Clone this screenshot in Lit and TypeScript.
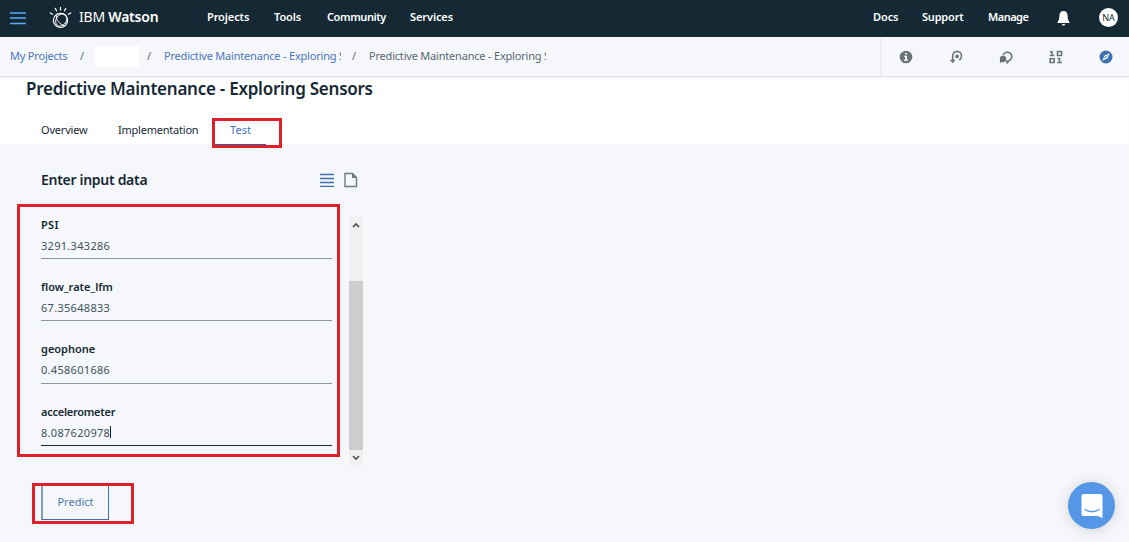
import { LitElement, html, css } from "lit";
import { customElement } from "lit/decorators.js";

const FIELDS = [
  { name: "PSI", value: "3291.343286", cls: "psi" },
  { name: "flow_rate_lfm", value: "67.35648833", cls: "flow" },
  { name: "geophone", value: "0.458601686", cls: "geo" },
  { name: "accelerometer", value: "8.087620978", cls: "acc" },
];

@customElement("top-bar")
class TopBar extends LitElement {
  static styles = css`
    :host { display: flex; align-items: center; box-sizing: border-box; height: 37px; padding-bottom: 4px; background: #152934; color: #fff; font-size: 11px; font-weight: 600; white-space: nowrap; }
    svg { display: block; flex: none; }
    .menu { margin: 3px 0 0 10px; }
    .logo { margin: 1px 0 0 23px; }
    .brand { width: 128px; margin-left: 7px; font-size: 14px; font-weight: 400; letter-spacing: -0.22px; }
    .brand b { font-weight: 600; }
    .projects { width: 67px; letter-spacing: -0.1px; }
    .tools { width: 53px; letter-spacing: -0.1px; }
    .community { width: 83px; letter-spacing: -0.4px; }
    .services { width: 60px; letter-spacing: -0.1px; }
    .spacer { flex: 1; }
    .docs { width: 49px; letter-spacing: -0.1px; }
    .support { width: 66px; letter-spacing: -0.2px; }
    .manage { width: 69px; letter-spacing: -0.5px; }
    .bell { margin-top: 2px; }
    .avatar { display: flex; align-items: center; justify-content: center; width: 19px; height: 19px; margin: 2px 11px 0 29px; border-radius: 50%; background: #fff; color: #152934; font-size: 9px; font-weight: 400; }
  `;
  render() {
    return html`
      <svg class="menu" width="16" height="14" viewBox="0 0 16 14"><path d="M0 2h16M0 7h16M0 12.5h16" stroke="#5aaafa" stroke-width="1.3" /></svg>
      <svg class="logo" width="23" height="23" viewBox="0 0 23 23" fill="none" stroke="#fff" stroke-width="1.2" stroke-linecap="round">
        <circle cx="11.5" cy="14.4" r="7.1" />
        <ellipse cx="12.3" cy="14" rx="5.1" ry="6.7" transform="rotate(35 12.3 14)" stroke-width=".9" />
        <path d="M8 8.5c-2 4 1 9 7.5 11.5" stroke-width=".9" />
        <path d="M11.5 1.3v2.6M6.3 2.4l1.2 2.4M16.7 2.4l-1.2 2.4M1.2 6.9l2.4 1.4M21.8 6.9l-2.4 1.4" />
      </svg>
      <span class="brand">IBM <b>Watson</b></span>
      <span class="projects">Projects</span><span class="tools">Tools</span><span class="community">Community</span><span class="services">Services</span>
      <span class="spacer"></span>
      <span class="docs">Docs</span><span class="support">Support</span><span class="manage">Manage</span>
      <svg class="bell" width="13" height="16" viewBox="0 0 13 16" fill="#fff"><path d="M6.5 1C3.8 1 2.6 3 2.4 5.5 2.2 9 2 10.5.5 12v1h12v-1C11 10.5 10.8 9 10.6 5.5 10.4 3 9.2 1 6.5 1zM5 14h3c0 2-3 2-3 0z" /></svg>
      <span class="avatar">NA</span>
    `;
  }
}

@customElement("crumb-bar")
class CrumbBar extends LitElement {
  static styles = css`
    :host { display: flex; align-items: center; box-sizing: border-box; height: 40px; border-bottom: 1px solid #dfe3e6; background: #f5f7fa; color: #5a6872; font-size: 11px; white-space: nowrap; }
    span { flex: none; }
    .text { margin-top: -2px; }
    .link { color: #4a76bd; }
    .home { width: 70px; margin-left: 10px; letter-spacing: -0.2px; }
    .slash { width: 15px; }
    .blank { width: 44px; height: 21px; margin-right: 8px; background: #fff; }
    .title { width: 177px; margin-left: 2px; overflow: hidden; letter-spacing: -0.2px; }
    .link.title { margin-right: 11px; }
    .spacer { flex: 1; }
    .actions { display: grid; grid-template-columns: repeat(5, 50px); align-items: center; justify-items: center; width: 248px; height: 100%; border-left: 1px solid #e6eaee; }
    svg { display: block; }
  `;
  render() {
    return html`
      <span class="text link home">My Projects</span><span class="text slash">/</span><span class="blank"></span><span class="text slash">/</span>
      <span class="text link title">Predictive Maintenance - Exploring Sensors</span>
      <span class="text slash">/</span><span class="text title">Predictive Maintenance - Exploring Sensors</span>
      <span class="spacer"></span>
      <div class="actions">
        <svg width="14" height="14" viewBox="0 0 14 14"><circle cx="7" cy="7" r="6.3" fill="#6b7479" /><path d="M6.2 3h1.8v1.6H6.2zM5 5.7h3v4h1.2v1.1H4.9V9.7h1.3V6.7H5z" fill="#fff" /></svg>
        <svg width="14" height="14" viewBox="0 0 14 14" fill="none" stroke="#6b7479"><path d="M3.7 11V5.8a4.4 4.4 0 0 1 8.8 0c0 2-.8 3.3-2.2 4.2" stroke-width="1.6" /><path d="M.7 9.8h6L3.7 13.3z" fill="#6b7479" stroke="none" /><circle cx="8.1" cy="6.3" r="1.9" fill="#6b7479" stroke="none" /></svg>
        <svg width="14" height="14" viewBox="0 0 14 14"><path d="M4.2 5.2a4.4 4.4 0 1 1 5.8 5.5L8.3 12.8l-.8-2.500" fill="none" stroke="#6b7479" stroke-width="1.6" /><circle cx="4" cy="9" r="3.2" fill="#6b7479" /><path d="M1 9v4l3-1.5z" fill="#6b7479" /></svg>
        <svg width="14" height="14" viewBox="0 0 14 14" fill="none" stroke="#6b7479" stroke-width="1.6"><path d="M1 1.7h2V5.5M.8 5.5h4.5M8.5 1.5h4v4h-4zM1.2 8.7h4v3.8h-4zM8.5 8.5h2v4M8.2 12.5h4.8" /></svg>
        <svg width="14" height="14" viewBox="0 0 14 14"><circle cx="7" cy="7" r="6.5" fill="#3d70b2" /><path d="M10.8 3.2 8.4 8.4 3.2 10.8 5.6 5.6z" fill="#fff" /><path d="m5.5 8.5 3-3" stroke="#3d70b2" /></svg>
      </div>
    `;
  }
}

@customElement("input-form")
class InputForm extends LitElement {
  static styles = css`
    :host { display: block; padding: 26px 0 0 41px; }
    .head { display: flex; align-items: center; width: 317px; height: 20px; }
    .head h2 { flex: 1; margin: -1px 0 0; font-size: 14px; font-weight: 600; letter-spacing: -0.3px; }
    svg { display: block; }
    .list { margin-right: 10px; }
    .scroll { display: flex; justify-content: space-between; position: relative; width: 322px; height: 248px; margin-top: 27px; }
    .fields { width: 291px; }
    .field { display: flex; flex-direction: column; box-sizing: border-box; height: 42.2px; margin-bottom: 20px; border-bottom: 1.5px solid #8b969e; }
    .field.acc { border-color: #152934; }
    .label { height: 17px; line-height: 16px; font-size: 11px; font-weight: 600; }
    .psi .label { letter-spacing: 0.3px; }
    .acc .label { letter-spacing: -0.25px; }
    .value { display: flex; align-items: center; height: 23px; font-size: 11px; color: #41525c; letter-spacing: 0.3px; }
    .caret { width: 1px; height: 12px; background: #152934; }
    .bar { display: flex; flex-direction: column; align-items: center; justify-content: space-between; width: 14px; background: #f0f0f0; }
    .bar svg { margin: 5px 0 4px; }
    .thumb { width: 14px; height: 169px; margin-top: 49px; background: #cdcdcd; }
    .mark { position: absolute; box-sizing: border-box; border: 3px solid #de202b; pointer-events: none; }
    .mark.form { left: -24px; top: -13px; width: 323px; height: 253px; }
    .submit { position: relative; width: 68px; height: 37px; margin-top: 18px; }
    .mark.go { left: -9px; top: 0; width: 102px; height: 41px; }
    button { display: block; box-sizing: border-box; width: 68px; height: 37px; padding: 0; border: 1px solid #3d70b2; border-left: 2px solid #7e9fc4; outline: 0; background: transparent; color: #4a79b7; font: 11px "Noto Sans", sans-serif; }
  `;
  render() {
    return html`
      <div class="head">
        <h2>Enter input data</h2>
        <svg class="list" width="14" height="14" viewBox="0 0 14 14"><path d="M0 1.5h14M0 5.5h14M0 9.5h14M0 13.4h14" stroke="#3d70b2" stroke-width="1.3" /></svg>
        <svg width="14" height="16" viewBox="0 0 14 16"><path d="M1 1.5h7.5l4 4v9H1z" fill="none" stroke="#6f7880" stroke-width="1.4" /><path d="M8 1v5h5z" fill="#6f7880" /></svg>
      </div>
      <div class="scroll">
        <div class="fields">
          ${FIELDS.map((f) => html`<div class="field ${f.cls}"><span class="label">${f.name}</span><span class="value">${f.value}${f.cls === "acc" ? html`<i class="caret"></i>` : ""}</span></div>`)}
        </div>
        <div class="bar">
          <svg width="8" height="6" viewBox="0 0 8 6"><path d="m1 5 3-3 3 3" fill="none" stroke="#505050" stroke-width="1.7" /></svg>
          <div class="thumb"></div>
          <svg width="8" height="6" viewBox="0 0 8 6"><path d="m1 1 3 3 3-3" fill="none" stroke="#505050" stroke-width="1.7" /></svg>
        </div>
        <div class="mark form"></div>
      </div>
      <div class="submit"><button>Predict</button><div class="mark go"></div></div>
    `;
  }
}

@customElement("app-root")
class AppRoot extends LitElement {
  static styles = css`
    :host { display: block; position: relative; height: 542px; overflow: hidden; background: #f5f7fa; color: #152934; font-family: "Noto Sans", sans-serif; }
    .intro { box-sizing: border-box; height: 67px; background: #fff; box-shadow: inset 0 2px 2px -1px #dfe3e680; }
    h1 { height: 23px; margin: 0; padding-left: 26px; font-size: 17px; line-height: 23px; font-weight: 600; letter-spacing: -0.25px; white-space: nowrap; }
    .tabs { display: flex; height: 44px; padding: 18px 0 0 41px; box-sizing: border-box; font-size: 11px; }
    .tab { line-height: 24px; }
    .overview { width: 77px; letter-spacing: -0.2px; }
    .implementation { width: 97px; letter-spacing: -0.22px; }
    .test { position: relative; width: 51px; height: 28px; color: #4a76bd; text-align: center; border-bottom: 2px solid #3d5a98; box-sizing: border-box; }
    .mark { position: absolute; left: -3px; top: 0; width: 70px; height: 30px; box-sizing: border-box; border: 3px solid #de202b; }
    .chat { position: absolute; right: 14px; bottom: 13px; display: flex; align-items: center; justify-content: center; width: 47px; height: 47px; border-radius: 50%; background: #5596e6; box-shadow: 0 1px 14px #00000026; }
  `;
  render() {
    return html`
      <top-bar></top-bar>
      <crumb-bar></crumb-bar>
      <section class="intro">
        <h1>Predictive Maintenance - Exploring Sensors</h1>
        <div class="tabs">
          <span class="tab overview">Overview</span><span class="tab implementation">Implementation</span>
          <span class="tab test">Test<i class="mark"></i></span>
        </div>
      </section>
      <input-form></input-form>
      <div class="chat">
        <svg width="22" height="26" viewBox="0 0 22 26"><path d="M2.5 1h17A2 2 0 0 1 21.5 3v22l-5-2h-14a2 2 0 0 1-2-2V3a2 2 0 0 1 2-2z" fill="#fff" /><path d="M4 16.5c4 3 10 3 14 0" fill="none" stroke="#5596e6" stroke-width="1.4" stroke-linecap="round" /></svg>
      </div>
    `;
  }
}
